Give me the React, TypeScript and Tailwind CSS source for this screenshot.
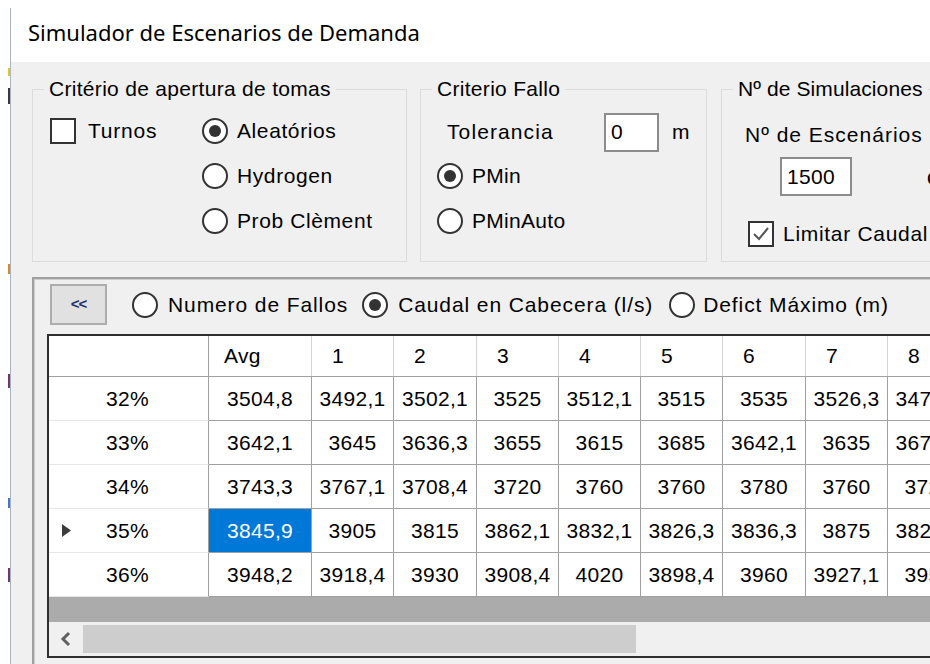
import React from "react";

type CellRow = { label: string; values: string[]; current?: boolean };

const ROWS: CellRow[] = [
  { label: "32%", values: ["3504,8", "3492,1", "3502,1", "3525", "3512,1", "3515", "3535", "3526,3", "3478,1"] },
  { label: "33%", values: ["3642,1", "3645", "3636,3", "3655", "3615", "3685", "3642,1", "3635", "3672,1"] },
  { label: "34%", values: ["3743,3", "3767,1", "3708,4", "3720", "3760", "3760", "3780", "3760", "3725"] },
  { label: "35%", values: ["3845,9", "3905", "3815", "3862,1", "3832,1", "3826,3", "3836,3", "3875", "3824,3"], current: true },
  { label: "36%", values: ["3948,2", "3918,4", "3930", "3908,4", "4020", "3898,4", "3960", "3927,1", "3950"] },
];

const HEADERS = ["Avg", "1", "2", "3", "4", "5", "6", "7", "8"];
const COL_W = ["w-[103px]", "w-[82px]", "w-[83px]", "w-[82px]", "w-[82px]", "w-[82px]", "w-[83px]", "w-[82px]", "w-[82px]"];

function Radio({ checked }: { checked?: boolean }) {
  return (
    <span className="flex h-[26px] w-[26px] shrink-0 items-center justify-center rounded-full border-2 border-[#333333] bg-white">
      {checked && <span className="h-[12px] w-[12px] rounded-full bg-[#333333]" />}
    </span>
  );
}

function CheckBox({ checked }: { checked?: boolean }) {
  return (
    <span className="flex h-[26px] w-[26px] shrink-0 items-center justify-center border-2 border-[#333333] bg-white">
      {checked && (
        <svg width="18" height="18" viewBox="0 0 18 18">
          <polyline points="2,9 7,14 16,3" fill="none" stroke="#555555" strokeWidth="2" />
        </svg>
      )}
    </span>
  );
}

function TextBox({ value, w }: { value: string; w: string }) {
  return (
    <div className={`flex h-[39px] ${w} shrink-0 items-center border-2 border-[#8c8c8c] bg-white pl-[5px]`}>
      {value}
    </div>
  );
}

function RowArrow() {
  return (
    <svg width="10" height="13" viewBox="0 0 10 13">
      <polygon points="0,0 9,6.5 0,13" fill="#3c3c3c" />
    </svg>
  );
}

export default function App() {
  return (
    <div className="flex h-[664px] w-[930px] overflow-hidden bg-white font-['Liberation_Sans',Arial,sans-serif] text-[21px] tracking-[0.3px] text-black">
      {/* strip of desktop behind the window edge */}
      <div className="flex w-[10px] shrink-0 flex-col items-end">
        <div className="h-[68px]" />
        <div className="h-[8px] w-[2px] bg-[#e2c33c]" />
        <div className="h-[12px]" />
        <div className="h-[16px] w-[2px] bg-[#3a3a3a]" />
        <div className="h-[160px]" />
        <div className="h-[10px] w-[2px] bg-[#d08a3c]" />
        <div className="h-[100px]" />
        <div className="h-[14px] w-[2px] bg-[#6a3a6a]" />
        <div className="h-[110px]" />
        <div className="h-[10px] w-[2px] bg-[#4a78c0]" />
        <div className="h-[60px]" />
        <div className="h-[14px] w-[2px] bg-[#6a3a6a]" />
      </div>
      <div className="mt-[8px] w-[1px] shrink-0 bg-[#a8b4c2]" />

      <div className="flex min-w-0 flex-1 flex-col">
        {/* title bar */}
        <div className="flex h-[62px] shrink-0 items-center bg-white pl-[17px] pt-[2px] font-['Noto_Sans',sans-serif] text-[22px] tracking-normal">
          Simulador de Escenarios de Demanda
        </div>

        {/* dialog body */}
        <div className="flex flex-1 flex-col bg-[#f0f0f0]">
          <div className="flex pl-[21px] pt-[15px]">
            {/* group: opening criterion */}
            <fieldset className="h-[185px] w-[375px] shrink-0 border border-[#dcdcdc]">
              <legend className="ml-[11px] px-[5px] leading-[24px]">Critério de apertura de tomas</legend>
              <div className="flex pl-[17px] pt-[7px]">
                <div className="flex h-[45px] w-[152px] items-center">
                  <CheckBox />
                  <span className="ml-[12px] tracking-[0.8px]">Turnos</span>
                </div>
                <div className="flex flex-col">
                  {["Aleatórios", "Hydrogen", "Prob Clèment"].map((t, i) => (
                    <div key={t} className="flex h-[45px] items-center">
                      <Radio checked={i === 0} />
                      <span className="ml-[9px] tracking-[0.6px]">{t}</span>
                    </div>
                  ))}
                </div>
              </div>
            </fieldset>

            {/* group: failure criterion */}
            <fieldset className="ml-[13px] h-[185px] w-[287px] shrink-0 border border-[#dcdcdc]">
              <legend className="ml-[11px] px-[5px] leading-[24px]">Criterio Fallo</legend>
              <div className="flex flex-col pt-[10px]">
                <div className="flex h-[42px] items-center">
                  <span className="ml-[26px] w-[157px] tracking-[1.1px]">Tolerancia</span>
                  <TextBox value="0" w="w-[55px]" />
                  <span className="ml-[13px]">m</span>
                </div>
                {["PMin", "PMinAuto"].map((t, i) => (
                  <div key={t} className="flex h-[45px] items-center pl-[16px]">
                    <Radio checked={i === 0} />
                    <span className="ml-[9px]">{t}</span>
                  </div>
                ))}
              </div>
            </fieldset>

            {/* group: number of simulations */}
            <fieldset className="ml-[14px] h-[185px] w-[260px] shrink-0 border border-[#dcdcdc]">
              <legend className="ml-[11px] px-[5px] leading-[24px] tracking-[0.1px]">Nº de Simulaciones</legend>
              <div className="flex flex-col pt-[19px]">
                <div className="flex h-[30px] items-center pl-[23px] tracking-[1px]">Nº de Escenários</div>
                <div className="mt-[7px] flex h-[39px] items-center pl-[58px]">
                  <TextBox value="1500" w="w-[72px]" />
                  <span className="ml-[75px] whitespace-nowrap">de</span>
                </div>
                <div className="mt-[25px] flex h-[26px] items-center pl-[26px]">
                  <CheckBox checked />
                  <span className="ml-[9px] whitespace-nowrap tracking-[0.7px]">Limitar Caudal</span>
                </div>
              </div>
            </fieldset>
          </div>

          {/* results panel */}
          <div className="ml-[21px] mt-[15px] h-[400px] w-[920px] shrink-0 border-l-2 border-t-2 border-[#a0a0a0]">
            <div className="h-full border-l border-t border-[#cfcfcf]">
              <div className="flex items-center pl-[15px] pt-[4px] tracking-[0.9px]">
                <div className="flex h-[41px] w-[57px] shrink-0 items-center justify-center border-2 border-[#adadad] bg-[#e1e1e1] text-[15px] font-bold tracking-[-1px] text-[#23306a]">
                  &lt;&lt;
                </div>
                <div className="ml-[25px] flex items-center">
                  <Radio />
                  <span className="ml-[10px] whitespace-nowrap">Numero de Fallos</span>
                </div>
                <div className="ml-[14px] flex items-center">
                  <Radio checked />
                  <span className="ml-[10px] whitespace-nowrap">Caudal en Cabecera (l/s)</span>
                </div>
                <div className="ml-[16px] flex items-center">
                  <Radio />
                  <span className="ml-[8px] whitespace-nowrap">Defict Máximo (m)</span>
                </div>
              </div>

              {/* data grid */}
              <div className="ml-[12px] mt-[9px] flex w-[1000px] flex-col border-2 border-r-0 border-[#2e2e2e]">
                <div className="flex h-[41px] border-b border-[#a0a0a0] bg-white">
                  <div className="w-[160px] shrink-0 border-r border-[#a0a0a0]" />
                  {HEADERS.map((h, i) => (
                    <div
                      key={h}
                      className={`${COL_W[i]} flex shrink-0 items-center border-r border-[#d4d4d4] ${i === 0 ? "pl-[15px]" : "pl-[20px]"}`}
                    >
                      {h}
                    </div>
                  ))}
                </div>
                {ROWS.map((r) => (
                  <div key={r.label} className="flex h-[44px] bg-white">
                    <div className="flex w-[160px] shrink-0 items-center border-b border-r border-b-[#e6e6e6] border-r-[#a0a0a0] pl-[13px]">
                      <span className="flex w-[44px] items-center">{r.current && <RowArrow />}</span>
                      {r.label}
                    </div>
                    {r.values.map((v, i) => (
                      <div
                        key={i}
                        className={`${COL_W[i]} flex shrink-0 items-center justify-center border-b border-r border-[#a0a0a0] ${
                          r.current && i === 0 ? "bg-[#0078d7] text-white" : ""
                        }`}
                      >
                        {v}
                      </div>
                    ))}
                  </div>
                ))}
                <div className="h-[25px] bg-[#ababab]" />
                <div className="flex h-[34px] bg-[#f0f0f0]">
                  <div className="flex w-[34px] shrink-0 items-center justify-center">
                    <svg width="14" height="16" viewBox="0 0 14 16">
                      <polyline points="10,2 4,8 10,14" fill="none" stroke="#606060" strokeWidth="3" />
                    </svg>
                  </div>
                  <div className="my-[3px] w-[553px] bg-[#cdcdcd]" />
                </div>
              </div>
            </div>
          </div>
        </div>
      </div>
    </div>
  );
}
